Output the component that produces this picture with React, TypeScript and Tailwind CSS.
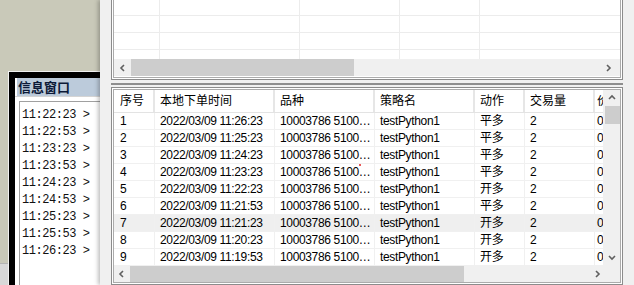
import React from 'react';

const times = ['11:22:23', '11:22:53', '11:23:23', '11:23:53', '11:24:23', '11:24:53', '11:25:23', '11:25:53', '11:26:23'];

const rows = [
  { id: 1, time: '11:26:23', act: '平多' },
  { id: 2, time: '11:25:23', act: '平多' },
  { id: 3, time: '11:24:23', act: '平多' },
  { id: 4, time: '11:23:23', act: '平多' },
  { id: 5, time: '11:22:23', act: '开多' },
  { id: 6, time: '11:21:53', act: '平多' },
  { id: 7, time: '11:21:23', act: '开多' },
  { id: 8, time: '11:20:23', act: '开多' },
  { id: 9, time: '11:19:53', act: '开多' },
];

// small scrollbar chevron
function Chevron({ dir }: { dir: 'left' | 'right' | 'up' | 'down' }) {
  const pts = {
    left: '5,1 2,4 5,7',
    right: '3,1 6,4 3,7',
    up: '1,5 4,2 7,5',
    down: '1,3 4,6 7,3',
  }[dir];
  return (
    <svg width="8" height="8" viewBox="0 0 8 8" className="block">
      <polyline points={pts} fill="none" stroke="#606060" strokeWidth="1.6" />
    </svg>
  );
}

function UpperGrid() {
  const cols = ['w-[46px]', 'w-[140px]', 'w-[100px]', 'w-[80px]'];
  return (
    <div className="h-[80px] shrink-0 border-x border-b border-[#8c8c8c] bg-white px-px pb-px">
      <div className="h-full border-x border-b border-[#ababab] flex flex-col">
        <div className="h-[59px] overflow-hidden">
          {[16, 17, 17, 17].map((h, i) => (
            <div key={i} className="flex border-b border-[#ececec]" style={{ height: h }}>
              {cols.map((c, j) => (
                <div key={j} className={`${c} shrink-0 border-r border-[#ececec]`} />
              ))}
              <div className="flex-1" />
            </div>
          ))}
        </div>
        <div className="h-[17px] bg-[#f0f0f0] flex items-center">
          <div className="w-[17px] flex justify-center"><Chevron dir="left" /></div>
          <div className="w-[223px] h-full bg-[#cdcdcd]" />
          <div className="flex-1" />
          <div className="w-[17px] flex justify-start pl-[1px]"><Chevron dir="right" /></div>
        </div>
      </div>
    </div>
  );
}

function LowerGrid() {
  const widths = ['w-[41px] pl-[6px]', 'w-[120px] pl-[5px]', 'w-[100px] pl-[5px]', 'w-[100px] pl-[5px]', 'w-[50px] pl-[5px]', 'w-[70px] pl-[5px]', 'w-[80px] pl-[2px]'];
  const heads = ['序号', '本地下单时间', '品种', '策略名', '动作', '交易量', '价格'];
  return (
    <div className="flex-1 min-h-0 min-w-0 border border-[#8c8c8c] bg-white p-px">
      <div className="h-full border border-[#ababab] flex flex-col">
        <div className="flex flex-1 min-h-0">
          <div className="flex-1 min-w-0 overflow-hidden">
            <div className="flex h-[23px] border-b border-[#e3e3e3] w-max">
              {heads.map((h, i) => (
                <div key={i} className={`${widths[i]} shrink-0 border-r-[2px] border-[#e6e6e6] leading-[22px] text-[12px] whitespace-nowrap overflow-hidden`}>
                  {h}
                </div>
              ))}
            </div>
            {rows.map(r => (
              <div key={r.id} className={`flex h-[17px] border-b border-[#f0f0f0] w-max ${r.id === 7 ? 'bg-[#efefef]' : ''}`}>
                {[String(r.id), `2022/03/09 ${r.time}`, '10003786 5100…', 'testPython1', r.act, '2', '0'].map((v, i) => (
                  <div key={i} className={`${widths[i]} shrink-0 border-r border-[#f0f0f0] leading-[16px] text-[12px] tracking-[-0.35px] whitespace-nowrap overflow-hidden`}>
                    {v}
                  </div>
                ))}
              </div>
            ))}
          </div>
          <div className="w-[17px] shrink-0 bg-[#f0f0f0] flex flex-col items-center">
            <div className="pt-[4px] pb-[4px]"><Chevron dir="up" /></div>
            <div className="w-[15px] ml-px h-[18px] bg-[#cdcdcd]" />
            <div className="flex-1" />
            <div className="pb-[5px]"><Chevron dir="down" /></div>
          </div>
        </div>
        <div className="h-[16px] shrink-0 flex">
          <div className="flex-1 bg-[#f0f0f0] flex items-center">
            <div className="w-[16px] flex justify-center"><Chevron dir="left" /></div>
            <div className="w-[334px] h-full bg-[#cdcdcd]" />
            <div className="flex-1" />
            <div className="pr-[2px]"><Chevron dir="right" /></div>
          </div>
          <div className="w-[17px] bg-[#f0f0f0]" />
        </div>
      </div>
    </div>
  );
}

export default function App() {
  return (
    <div className="relative flex w-[634px] h-[285px] overflow-hidden bg-[#c9c9b9] text-black font-['Liberation_Sans','Noto_Sans_CJK_SC',sans-serif]">
      {/* desktop + info window */}
      <div className="flex w-[100px] shrink-0 h-full">
        <div className="w-[8px] flex flex-col">
          <div className="flex-1" />
          <div className="h-[22px] bg-[#d8d8d8] border-t border-[#b4b4b4]" />
        </div>
        <div className="flex-1 min-w-0 mt-[71px] border-l border-t border-[#f2f2f2] flex flex-col">
          <div className="flex-1 flex flex-col border-l-[6px] border-t-[6px] border-black bg-white">
            <div className="h-[18px] ml-[2px] pl-px bg-[#bccbdb] flex items-center whitespace-nowrap font-bold text-[13px] text-[#0c1a38] font-['Noto_Sans_CJK_SC',sans-serif]">
              信息窗口
            </div>
            <div className="h-px bg-[#d4d4d4]" />
            <div className="flex-1 pl-[4px] pt-[4px] flex flex-col">
              <div className="flex-1 border-l border-t border-[#a0a0a0] pl-[2px] pt-[5px] overflow-hidden">
                {times.map(t => (
                  <div key={t} className="h-[17px] leading-[17px] text-[12px] tracking-[-0.45px] whitespace-nowrap text-[#111] font-['Liberation_Mono',monospace]">
                    {t} &gt;
                  </div>
                ))}
              </div>
            </div>
          </div>
        </div>
      </div>

      {/* main window */}
      <div className="flex-1 min-w-0 overflow-hidden flex flex-col bg-[#f0f0f0] px-[11px] shadow-[-2px_0_4px_rgba(0,0,0,0.25)] z-10">
        <UpperGrid />
        <div className="h-[7px] shrink-0 pt-[3px]">
          <div className="h-[2px] bg-[#8e8e8e]" />
        </div>
        <LowerGrid />
      </div>

      <div className="absolute left-[359px] top-[164px] w-[2px] h-[2px] rounded-full bg-[#e02020] z-20" />
    </div>
  );
}
